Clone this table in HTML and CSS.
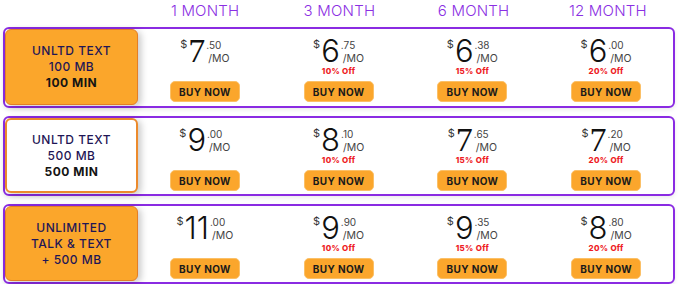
FILE: index.html
```html
<!DOCTYPE html>
<html>
<head>
<meta charset="utf-8">
<link rel="stylesheet" href="styles.css">
</head>
<body>
<div class="table">
  <div class="head">
    <div></div>
    <div class="term">1 MONTH</div>
    <div class="term">3 MONTH</div>
    <div class="term">6 MONTH</div>
    <div class="term">12 MONTH</div>
  </div>

  <div class="plan">
    <div class="label label-orange">
      <span>UNLTD TEXT</span><span>100 MB</span><span class="strong">100 MIN</span>
    </div>
    <div class="cell">
      <div class="price"><span class="cur">$</span><span class="num serif">7</span><span class="stack"><span class="cents">.50</span><span class="mo">/MO</span></span></div>
      <div class="off"></div>
      <button class="buy">BUY NOW</button>
    </div>
    <div class="cell">
      <div class="price"><span class="cur">$</span><span class="num">6</span><span class="stack"><span class="cents">.75</span><span class="mo">/MO</span></span></div>
      <div class="off">10% Off</div>
      <button class="buy">BUY NOW</button>
    </div>
    <div class="cell">
      <div class="price"><span class="cur">$</span><span class="num">6</span><span class="stack"><span class="cents">.38</span><span class="mo">/MO</span></span></div>
      <div class="off">15% Off</div>
      <button class="buy">BUY NOW</button>
    </div>
    <div class="cell">
      <div class="price"><span class="cur">$</span><span class="num">6</span><span class="stack"><span class="cents">.00</span><span class="mo">/MO</span></span></div>
      <div class="off">20% Off</div>
      <button class="buy">BUY NOW</button>
    </div>
  </div>

  <div class="plan">
    <div class="label label-white">
      <span>UNLTD TEXT</span><span>500 MB</span><span class="strong">500 MIN</span>
    </div>
    <div class="cell">
      <div class="price"><span class="cur">$</span><span class="num">9</span><span class="stack"><span class="cents">.00</span><span class="mo">/MO</span></span></div>
      <div class="off"></div>
      <button class="buy">BUY NOW</button>
    </div>
    <div class="cell">
      <div class="price"><span class="cur">$</span><span class="num">8</span><span class="stack"><span class="cents">.10</span><span class="mo">/MO</span></span></div>
      <div class="off">10% Off</div>
      <button class="buy">BUY NOW</button>
    </div>
    <div class="cell">
      <div class="price"><span class="cur">$</span><span class="num serif">7</span><span class="stack"><span class="cents">.65</span><span class="mo">/MO</span></span></div>
      <div class="off">15% Off</div>
      <button class="buy">BUY NOW</button>
    </div>
    <div class="cell">
      <div class="price"><span class="cur">$</span><span class="num serif">7</span><span class="stack"><span class="cents">.20</span><span class="mo">/MO</span></span></div>
      <div class="off">20% Off</div>
      <button class="buy">BUY NOW</button>
    </div>
  </div>

  <div class="plan">
    <div class="label label-orange">
      <span>UNLIMITED</span><span>TALK &amp; TEXT</span><span>+ 500 MB</span>
    </div>
    <div class="cell">
      <div class="price"><span class="cur">$</span><span class="num">11</span><span class="stack"><span class="cents">.00</span><span class="mo">/MO</span></span></div>
      <div class="off"></div>
      <button class="buy">BUY NOW</button>
    </div>
    <div class="cell">
      <div class="price"><span class="cur">$</span><span class="num">9</span><span class="stack"><span class="cents">.90</span><span class="mo">/MO</span></span></div>
      <div class="off">10% Off</div>
      <button class="buy">BUY NOW</button>
    </div>
    <div class="cell">
      <div class="price"><span class="cur">$</span><span class="num">9</span><span class="stack"><span class="cents">.35</span><span class="mo">/MO</span></span></div>
      <div class="off">15% Off</div>
      <button class="buy">BUY NOW</button>
    </div>
    <div class="cell">
      <div class="price"><span class="cur">$</span><span class="num">8</span><span class="stack"><span class="cents">.80</span><span class="mo">/MO</span></span></div>
      <div class="off">20% Off</div>
      <button class="buy">BUY NOW</button>
    </div>
  </div>
</div>
</body>
</html>
```

FILE: styles.css
```css
* { box-sizing: border-box; }
html, body { margin: 0; padding: 0; background: #fff; }
body {
  font-family: Inter, "Noto Sans", "DejaVu Sans", sans-serif;
  color: #111;
}
.table {
  padding: 0 5px 0 3px;
  display: flex;
  flex-direction: column;
  gap: 8px;
}
.head {
  display: grid;
  grid-template-columns: 135px repeat(4, 1fr);
  height: 19px;
}
.term {
  text-align: center;
  font-size: 15px;
  font-weight: 300;
  letter-spacing: 0.2px;
  color: #8b2fe3;
  line-height: 22px;
}
.plan {
  display: grid;
  grid-template-columns: 133px repeat(4, 1fr);
  height: 81px;
  border: 2px solid #8a2be2;
  border-radius: 6px;
  box-shadow: 0 2px 4px rgba(0,0,0,0.08);
}
.plan + .plan { height: 80px; }
.label {
  display: flex;
  flex-direction: column;
  align-items: center;
  justify-content: center;
  border-radius: 6px;
  font-size: 12px;
  font-weight: 500;
  letter-spacing: 0.5px;
  line-height: 16px;
  color: #1f1656;
  box-shadow: 3px 2px 7px rgba(0,0,0,0.22);
  margin-bottom: 1px;
}
.label-orange { background: #fba62b; border: 1px solid #e47e25; }
.label-white { background: #fff; border: 2px solid #ec8a2c; }
.label .strong { font-weight: 700; color: #141414; }
.cell {
  display: flex;
  flex-direction: column;
  align-items: center;
  padding-top: 7px;
}
.price {
  display: flex;
  align-items: flex-start;
  height: 31px;
}
.cur {
  font-size: 11px;
  line-height: 11px;
  margin-top: 3px;
  color: #333;
  margin-right: 1px;
}
.num {
  font-size: 31px;
  line-height: 30px;
  font-weight: 300;
  color: #111;
}
.num.serif {
  font-family: "Liberation Serif", serif;
  font-size: 34px;
  font-weight: 400;
}
.stack {
  display: flex;
  flex-direction: column;
  margin-left: 1px;
}
.cents {
  font-size: 10px;
  line-height: 10px;
  margin-top: 4px;
  color: #444;
}
.mo {
  font-size: 10.5px;
  line-height: 11px;
  margin-top: 3px;
  margin-left: 2px;
  color: #444;
}
.off {
  height: 8px;
  line-height: 8px;
  font-size: 8px;
  font-weight: 800;
  letter-spacing: 0.3px;
  color: #ee1c25;
}
.buy {
  margin-top: 6px;
  width: 70px;
  height: 21px;
  border: 1px solid #fbc067;
  border-radius: 5px;
  background: #fba62c;
  font-family: inherit;
  font-size: 10px;
  font-weight: 700;
  letter-spacing: 0.4px;
  color: #1a1a1a;
  padding: 0;
}
```
